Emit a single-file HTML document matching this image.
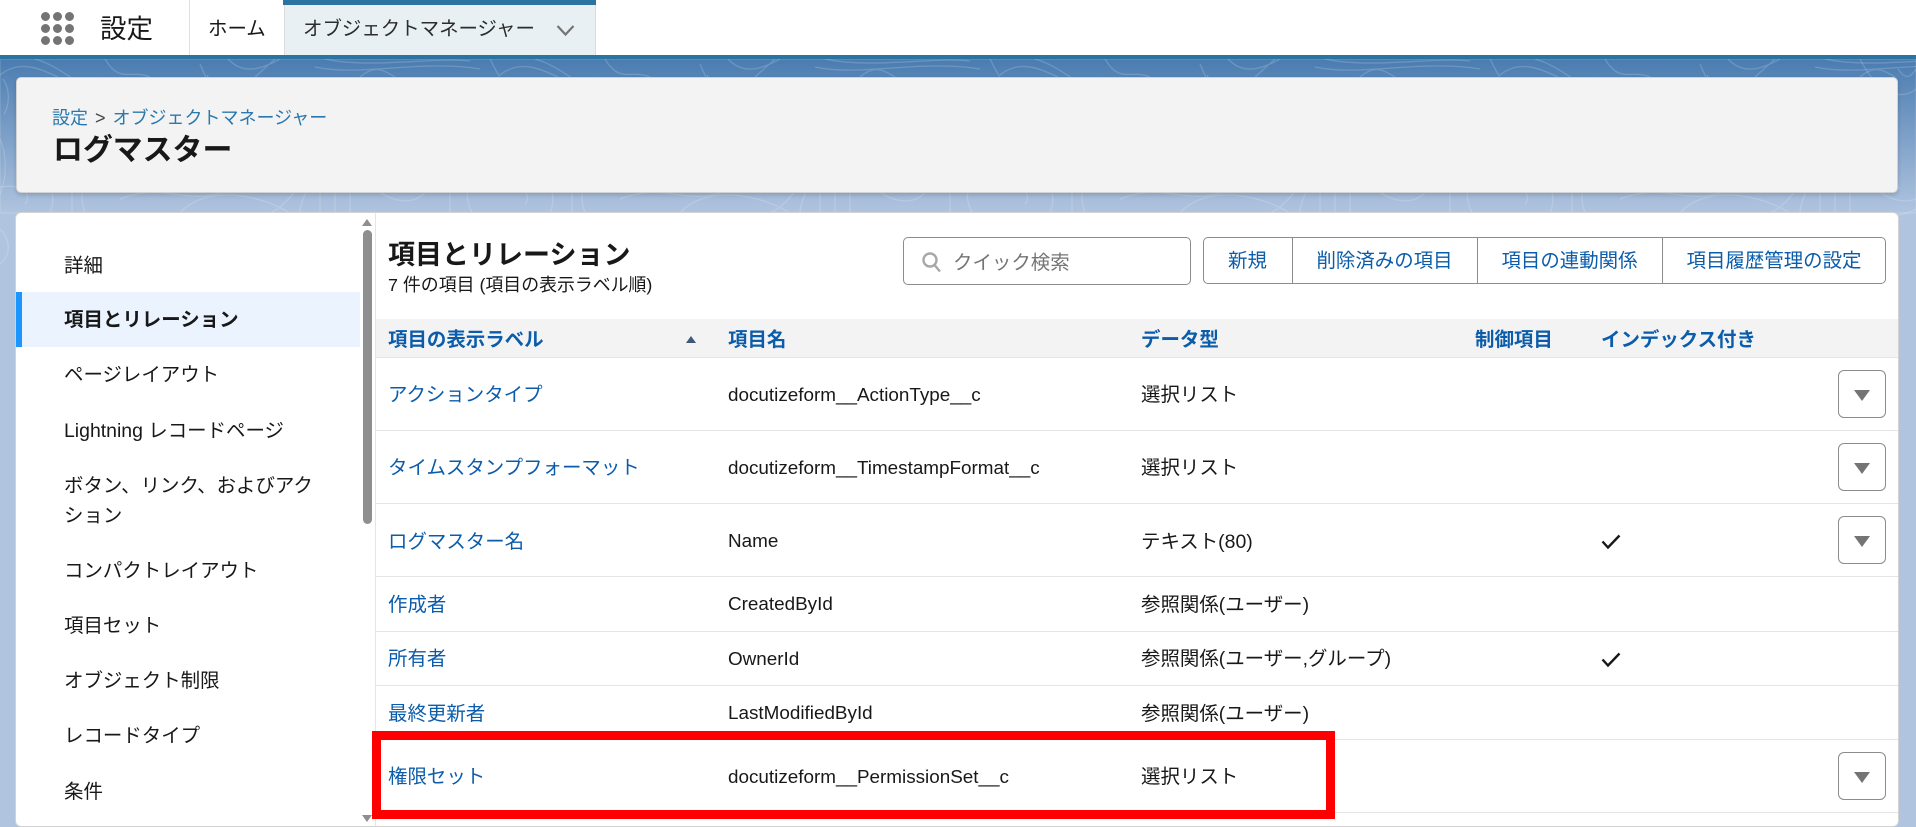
<!DOCTYPE html>
<html lang="ja"><head><meta charset="utf-8"><title>ログマスター</title>
<style>
*{box-sizing:border-box}
html,body{margin:0;padding:0;width:1916px;height:827px;overflow:hidden;background:#b0c4df}
body{position:relative;font-family:"Liberation Sans","Noto Sans CJK JP",sans-serif;color:#181818;font-size:19.45px}
.a{position:absolute}
.t{position:absolute;white-space:nowrap;height:30px;line-height:30px}
.n{font-size:18.87px}
.l{color:#0b5cab}
.b{font-weight:700}
.hb{position:absolute;left:376px;width:1522px;height:1px;background:#e5e5e5}
.dd{position:absolute;left:1838px;width:48px;height:48px;background:#fff;border:1px solid #8c8c8c;border-radius:6px}
.dd:after{content:"";position:absolute;left:15px;top:19px;border-left:8px solid transparent;border-right:8px solid transparent;border-top:11px solid #747474}
.dot{position:absolute;width:9px;height:9px;border-radius:50%;background:#747474}
.btn{position:absolute;top:238px;height:47px;line-height:47px;text-align:center;color:#0b5cab;white-space:nowrap}
</style></head><body>
<div class="a" style="left:0;top:59px;width:1916px;height:154px;background:linear-gradient(#4a7cb1,#b0c4df)"></div>
<svg class="a" style="left:0;top:59px" width="1916" height="768" fill="none" stroke="#fff" stroke-opacity=".17" stroke-width="1.3">
<defs><pattern id="p" width="500" height="154" patternUnits="userSpaceOnUse">
<path d="M0 16C20 0 40 10 58 18M35 0C70 10 85 40 100 18M105 0C120 25 130 10 150 18M200 5C215 40 205 10 208 18M228 0C245 18 265 8 280 0M255 18L275 0M315 8C360 18 420 0 480 10M325 0C370 10 430 -2 470 2M360 18C375 5 385 12 395 18M490 0C495 10 497 14 500 18"/>
<path d="M0 128C30 124 30 140 25 145M50 125C55 140 52 150 50 154M72 125V154M85 125C80 135 82 145 85 154M120 140C170 120 190 154 240 125M180 154C200 130 250 130 290 154M300 125C290 140 280 150 270 154M310 125C305 135 300 145 300 154M320 125V154M335 125V154M350 125V154M370 125C390 145 420 150 430 125M450 125V154M470 125C465 135 468 145 472 154"/>
</pattern></defs>
<rect width="1916" height="154" fill="url(#p)"/>
<path d="M1860 0C1880 40 1905 40 1916 30M1860 190C1880 150 1900 160 1916 150M1900 130C1885 110 1900 60 1880 40M1898 10C1905 20 1910 20 1916 10M0 80C8 100 6 120 0 135M0 170C10 180 12 195 0 205M3 20C10 30 10 45 4 55"/>
</svg>

<!-- top nav -->
<div class="a" style="left:0;top:0;width:1916px;height:55px;background:#fff"></div>
<div class="a" style="left:0;top:55px;width:1916px;height:4px;background:#2b74a1"></div>
<i class="dot" style="left:41px;top:12px"></i><i class="dot" style="left:53px;top:12px"></i><i class="dot" style="left:65px;top:12px"></i>
<i class="dot" style="left:41px;top:24px"></i><i class="dot" style="left:53px;top:24px"></i><i class="dot" style="left:65px;top:24px"></i>
<i class="dot" style="left:41px;top:36px"></i><i class="dot" style="left:53px;top:36px"></i><i class="dot" style="left:65px;top:36px"></i>
<div class="t" style="left:100px;top:14px;font-size:26.5px">設定</div>
<div class="a" style="left:189px;top:0;width:1px;height:55px;background:#e0e0e0"></div>
<div class="t" style="left:208px;top:14px">ホーム</div>
<div class="a" style="left:284px;top:0;width:312px;height:55px;background:#e9f0f4;border-left:1px solid #dcdcdc;border-right:1px solid #dcdcdc"></div>
<div class="a" style="left:283px;top:0;width:313px;height:5px;background:#2b74a1"></div>
<div class="t" style="left:303px;top:14px;color:#2c2c2c">オブジェクトマネージャー</div>
<svg class="a" style="left:556px;top:24px" width="19" height="13" fill="none" stroke="#747474" stroke-width="2.2"><path d="M1.500 2L9.500 10.500L17.500 2"/></svg>

<!-- page header -->
<div class="a" style="left:16px;top:77px;width:1882px;height:116px;background:#f3f3f3;border:1px solid #d2d2d2;border-radius:5px;box-shadow:0 2px 4px rgba(0,0,0,.16)"></div>
<div class="t" style="left:52px;top:103px;font-size:18px"><span style="color:#2a78ad">設定</span><span style="color:#444;margin:0 7px">&gt;</span><span style="color:#2a78ad">オブジェクトマネージャー</span></div>
<div class="t b" style="left:53px;top:136px;font-size:29.9px">ログマスター</div>

<!-- main card -->
<div class="a" style="left:16px;top:213px;width:1882px;height:613px;background:#fff;border-radius:5px;box-shadow:0 0 0 1px #d2d2d2"></div>
<div class="a" style="left:375px;top:213px;width:1px;height:613px;background:#e5e5e5"></div>
<div class="a" style="left:16px;top:292px;width:344px;height:55px;background:#eaf3fe"></div>
<div class="a" style="left:16px;top:292px;width:6px;height:55px;background:#1b96ff"></div>
<div class="a" style="left:363px;top:230px;width:9px;height:294px;background:#8f8f8f;border-radius:5px"></div>
<div class="a" style="left:362px;top:219px;border-left:5px solid transparent;border-right:5px solid transparent;border-bottom:7px solid #8f8f8f"></div>
<div class="a" style="left:362px;top:815px;border-left:5px solid transparent;border-right:5px solid transparent;border-top:7px solid #8f8f8f"></div>

<div class="t" style="left:64px;top:251px">詳細</div>
<div class="t b" style="left:64px;top:305px">項目とリレーション</div>
<div class="t" style="left:64px;top:360px">ページレイアウト</div>
<div class="t" style="left:64px;top:416px">Lightning レコードページ</div>
<div class="t" style="left:64px;top:471px">ボタン、リンク、およびアク</div>
<div class="t" style="left:64px;top:501px">ション</div>
<div class="t" style="left:64px;top:556px">コンパクトレイアウト</div>
<div class="t" style="left:64px;top:611px">項目セット</div>
<div class="t" style="left:64px;top:666px">オブジェクト制限</div>
<div class="t" style="left:64px;top:721px">レコードタイプ</div>
<div class="t" style="left:64px;top:777px">条件</div>

<!-- content header -->
<div class="t b" style="left:388px;top:240px;font-size:27px">項目とリレーション</div>
<div class="t" style="left:388px;top:270px;font-size:17.9px">7 件の項目 (項目の表示ラベル順)</div>
<div class="a" style="left:903px;top:237px;width:288px;height:48px;border:1px solid #8c8c8c;border-radius:5px;background:#fff"></div>
<svg class="a" style="left:921px;top:251px" width="22" height="22" fill="none" stroke="#a8a8a8" stroke-width="2.400"><circle cx="9" cy="9" r="6.500"/><path d="M13.500 14L19 20.500"/></svg>
<div class="t" style="left:953px;top:248px;color:#747474">クイック検索</div>

<div class="a" style="left:1203px;top:237px;width:683px;height:47px;border:1px solid #8c8c8c;border-radius:5px"></div>
<div class="a" style="left:1292px;top:237px;width:1px;height:47px;background:#8c8c8c"></div>
<div class="a" style="left:1477px;top:237px;width:1px;height:47px;background:#8c8c8c"></div>
<div class="a" style="left:1662px;top:237px;width:1px;height:47px;background:#8c8c8c"></div>
<div class="btn" style="left:1203px;width:89px">新規</div>
<div class="btn" style="left:1292px;width:185px">削除済みの項目</div>
<div class="btn" style="left:1477px;width:185px">項目の連動関係</div>
<div class="btn" style="left:1662px;width:224px">項目履歴管理の設定</div>

<!-- table header -->
<div class="a" style="left:376px;top:319px;width:1522px;height:38px;background:#f3f3f3"></div>
<div class="hb" style="top:357px"></div>
<div class="t b l" style="left:388px;top:325px">項目の表示ラベル</div>
<div class="a" style="left:686px;top:336px;border-left:5.500px solid transparent;border-right:5.500px solid transparent;border-bottom:7px solid #3e5878"></div>
<div class="t b l" style="left:728px;top:325px">項目名</div>
<div class="t b l" style="left:1141px;top:325px">データ型</div>
<div class="t b l" style="left:1475px;top:325px">制御項目</div>
<div class="t b l" style="left:1601px;top:325px">インデックス付き</div>

<!-- row lines -->
<div class="hb" style="top:430px"></div>
<div class="hb" style="top:503px"></div>
<div class="hb" style="top:576px"></div>
<div class="hb" style="top:631px"></div>
<div class="hb" style="top:685px"></div>
<div class="hb" style="top:739px"></div>
<div class="hb" style="top:812px"></div>

<!-- rows -->
<div class="t l" style="left:388px;top:380px">アクションタイプ</div>
<div class="t n" style="left:728px;top:380px">docutizeform__ActionType__c</div>
<div class="t" style="left:1141px;top:380px">選択リスト</div>
<div class="dd" style="top:370px"></div>

<div class="t l" style="left:388px;top:453px">タイムスタンプフォーマット</div>
<div class="t n" style="left:728px;top:453px">docutizeform__TimestampFormat__c</div>
<div class="t" style="left:1141px;top:453px">選択リスト</div>
<div class="dd" style="top:443px"></div>

<div class="t l" style="left:388px;top:527px">ログマスター名</div>
<div class="t n" style="left:728px;top:526px">Name</div>
<div class="t" style="left:1141px;top:527px">テキスト(80)</div>
<svg class="a" style="left:1601px;top:534px" width="20" height="16" fill="none" stroke="#181818" stroke-width="2.400"><path d="M1.500 7.500L7 13.500L18.500 1.500"/></svg>
<div class="dd" style="top:516px"></div>

<div class="t l" style="left:388px;top:590px">作成者</div>
<div class="t n" style="left:728px;top:589px">CreatedById</div>
<div class="t" style="left:1141px;top:590px">参照関係(ユーザー)</div>

<div class="t l" style="left:388px;top:644px">所有者</div>
<div class="t n" style="left:728px;top:644px">OwnerId</div>
<div class="t" style="left:1141px;top:644px">参照関係(ユーザー,グループ)</div>
<svg class="a" style="left:1601px;top:652px" width="20" height="16" fill="none" stroke="#181818" stroke-width="2.400"><path d="M1.500 7.500L7 13.500L18.500 1.500"/></svg>

<div class="t l" style="left:388px;top:699px">最終更新者</div>
<div class="t n" style="left:728px;top:698px">LastModifiedById</div>
<div class="t" style="left:1141px;top:699px">参照関係(ユーザー)</div>

<div class="t l" style="left:388px;top:762px">権限セット</div>
<div class="t n" style="left:728px;top:762px">docutizeform__PermissionSet__c</div>
<div class="t" style="left:1141px;top:762px">選択リスト</div>
<div class="dd" style="top:752px"></div>

<!-- highlight -->
<div class="a" style="left:372px;top:731px;width:963px;height:88px;border:9px solid #f00"></div>
</body></html>
